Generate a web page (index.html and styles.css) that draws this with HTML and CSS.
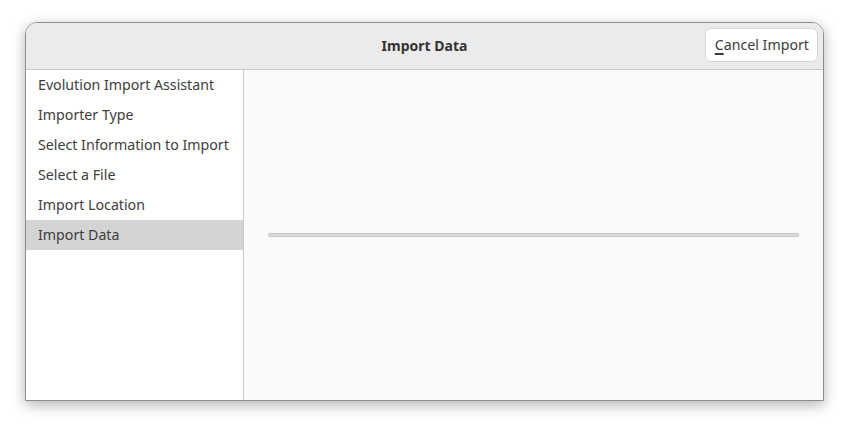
FILE: index.html
```html
<!DOCTYPE html>
<html lang="en">
<head>
<meta charset="UTF-8">
<title>Import Data</title>
<link rel="stylesheet" href="styles.css">
</head>
<body>
<div class="window">
    <div class="headerbar">
        <div class="title">Import Data</div>
        <button class="cancel"><u>C</u>ancel Import</button>
    </div>
    <div class="main">
        <ul class="steps">
            <li>Evolution Import Assistant</li>
            <li>Importer Type</li>
            <li>Select Information to Import</li>
            <li>Select a File</li>
            <li>Import Location</li>
            <li class="active">Import Data</li>
        </ul>
        <div class="page">
            <div class="progress"></div>
        </div>
    </div>
</div>
</body>
</html>
```

FILE: styles.css
```css
html, body {
    height: 100%;
}
body {
    margin: 0;
    padding: 22px 25px 0 25px;
    box-sizing: border-box;
    background-color: #fff;
    font-family: "Noto Sans", "DejaVu Sans", sans-serif;
    font-size: 14.2px;
    color: #3d3d3d;
}
.window {
    width: 797px;
    height: 377px;
    border: 1px solid #8c8c8c;
    border-radius: 12px 12px 0 0;
    overflow: hidden;
    display: flex;
    flex-direction: column;
    box-shadow: 0 4px 14px rgba(0, 0, 0, 0.3);
}
.headerbar {
    height: 46px;
    background-color: #ebebeb;
    border-bottom: 1px solid #c9c9c9;
    display: flex;
    align-items: center;
    justify-content: flex-end;
    padding-right: 5px;
    position: relative;
}
.title {
    position: absolute;
    left: 0;
    right: 0;
    top: 13px;
    text-align: center;
    font-weight: bold;
    font-size: 14px;
    color: #333;
}
.cancel {
    position: relative;
    height: 34px;
    margin-top: -2px;
    padding: 0 8px 1px 9px;
    background-color: #fff;
    border: 1px solid #d6d6d6;
    border-radius: 6px;
    font-family: inherit;
    font-size: 14.2px;
    color: #3d3d3d;
}
.cancel u {
    text-decoration-thickness: 1.5px;
    text-underline-offset: 3px;
}
.main {
    flex: 1;
    display: flex;
}
.steps {
    list-style: none;
    margin: 0;
    padding: 0;
    width: 217px;
    background-color: #fff;
    border-right: 1px solid #c9c9c9;
}
.steps li {
    height: 30px;
    line-height: 29px;
    padding-left: 12px;
    white-space: nowrap;
}
.steps li.active {
    background-color: #d4d4d4;
}
.page {
    flex: 1;
    background-color: #fafafa;
    display: flex;
    align-items: center;
    padding: 0 24px;
}
.progress {
    flex: 1;
    height: 2px;
    background-color: #dcdcdc;
    border: 1px solid #c6c6c6;
    border-radius: 2px;
}
```
